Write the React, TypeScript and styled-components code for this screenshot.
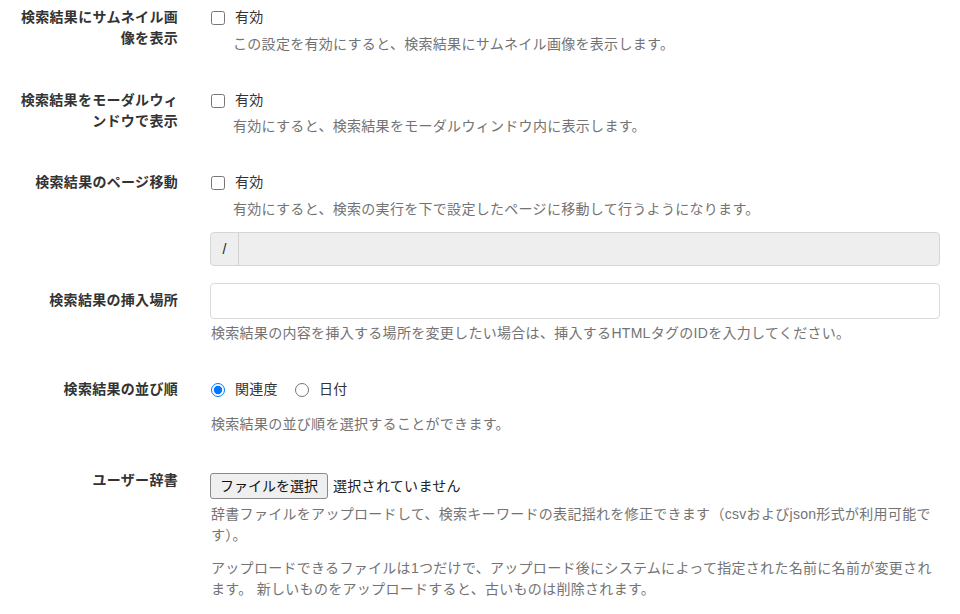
import React from "react";
import styled, { createGlobalStyle } from "styled-components";

const GlobalStyle = createGlobalStyle`
  body {
    margin: 0;
    background: #fff;
    color: #333;
    font-family: "Liberation Sans", "Noto Sans CJK JP", sans-serif;
    font-size: 14px;
    line-height: 21px;
    letter-spacing: 0.3px;
  }
`;

const Form = styled.form`
  padding: 0 20px 0 15px;
`;

const FormGroup = styled.div<{ $gap?: number }>`
  display: grid;
  grid-template-columns: 163px 1fr;
  column-gap: 32px;
  margin-bottom: ${(p) => (p.$gap ?? 28)}px;
`;

const Label = styled.label`
  text-align: right;
  font-weight: 700;
  padding-top: 7px;
  line-height: 21px;
`;

const Controls = styled.div<{ $pt?: number }>`
  padding-top: ${(p) => (p.$pt ?? 7)}px;
  min-width: 0;
`;

const CheckLine = styled.label`
  display: flex;
  align-items: center;
  height: 21px;
  color: #333;
`;

const Checkbox = styled.input.attrs({ type: "checkbox" })`
  width: 14px;
  height: 14px;
  margin: 0 10px 0 1px;
`;

const RadioRow = styled.div`
  display: flex;
  align-items: center;
  gap: 16px;
  height: 21px;
`;

const RadioOption = styled.label`
  display: flex;
  align-items: center;
`;

const Radio = styled.input.attrs({ type: "radio" })`
  width: 14px;
  height: 14px;
  margin: 0 10px 0 1px;
`;

const Help = styled.p<{ $mt?: number; $indent?: number }>`
  margin: ${(p) => (p.$mt ?? 6)}px 0 0;
  padding-left: ${(p) => (p.$indent ?? 1)}px;
  color: #737373;
  line-height: 21px;
`;

const InputGroup = styled.div`
  display: flex;
  margin-top: 12px;
  height: 34px;
  box-sizing: border-box;
  border: 1px solid #d6d6d6;
  border-radius: 4px;
  background: #eee;
  overflow: hidden;
`;

const Addon = styled.span`
  width: 27px;
  display: flex;
  align-items: center;
  justify-content: center;
  border-right: 1px solid #d2d2d2;
  color: #222;
  font-size: 14px;
`;

const DisabledInput = styled.input`
  flex: 1;
  border: 0;
  background: transparent;
  font: inherit;
`;

const TextInput = styled.input`
  display: block;
  width: 100%;
  box-sizing: border-box;
  height: 36px;
  border: 1px solid #dadada;
  border-radius: 4px;
  background: #fff;
  font: inherit;
  padding: 0 12px;
`;

const FileRow = styled.div`
  display: flex;
  align-items: center;
  gap: 5px;
  height: 26px;
`;

const FileButton = styled.button`
  height: 26px;
  padding: 0 9px;
  border: 1px solid #8a8a8a;
  border-radius: 3px;
  background: #efefef;
  color: #111;
  font: inherit;
  line-height: 24px;
`;

const FileName = styled.span`
  color: #222;
`;

export default function App() {
  return (
    <>
      <GlobalStyle />
      <Form>
        <FormGroup>
          <Label>検索結果にサムネイル画像を表示</Label>
          <Controls>
            <CheckLine>
              <Checkbox />
              有効
            </CheckLine>
            <Help $indent={23}>この設定を有効にすると、検索結果にサムネイル画像を表示します。</Help>
          </Controls>
        </FormGroup>

        <FormGroup>
          <Label>検索結果をモーダルウィンドウで表示</Label>
          <Controls>
            <CheckLine>
              <Checkbox />
              有効
            </CheckLine>
            <Help $indent={23} $mt={5}>
              有効にすると、検索結果をモーダルウィンドウ内に表示します。
            </Help>
          </Controls>
        </FormGroup>

        <FormGroup $gap={17}>
          <Label>検索結果のページ移動</Label>
          <Controls>
            <CheckLine>
              <Checkbox />
              有効
            </CheckLine>
            <Help $indent={23}>
              有効にすると、検索の実行を下で設定したページに移動して行うようになります。
            </Help>
            <InputGroup>
              <Addon>/</Addon>
              <DisabledInput disabled />
            </InputGroup>
          </Controls>
        </FormGroup>

        <FormGroup>
          <Label>検索結果の挿入場所</Label>
          <Controls $pt={0}>
            <TextInput type="text" />
            <Help $mt={4}>
              検索結果の内容を挿入する場所を変更したい場合は、挿入するHTMLタグのIDを入力してください。
            </Help>
          </Controls>
        </FormGroup>

        <FormGroup>
          <Label>検索結果の並び順</Label>
          <Controls>
            <RadioRow>
              <RadioOption>
                <Radio name="order" defaultChecked />
                関連度
              </RadioOption>
              <RadioOption>
                <Radio name="order" />
                日付
              </RadioOption>
            </RadioRow>
            <Help $mt={14}>検索結果の並び順を選択することができます。</Help>
          </Controls>
        </FormGroup>

        <FormGroup>
          <Label>ユーザー辞書</Label>
          <Controls $pt={10}>
            <FileRow>
              <FileButton type="button">ファイルを選択</FileButton>
              <FileName>選択されていません</FileName>
            </FileRow>
            <Help $mt={5}>
              辞書ファイルをアップロードして、検索キーワードの表記揺れを修正できます（csvおよびjson形式が利用可能です）。
            </Help>
            <Help $mt={12}>
              アップロードできるファイルは1つだけで、アップロード後にシステムによって指定された名前に名前が変更されます。 新しいものをアップロードすると、古いものは削除されます。
            </Help>
          </Controls>
        </FormGroup>
      </Form>
    </>
  );
}
